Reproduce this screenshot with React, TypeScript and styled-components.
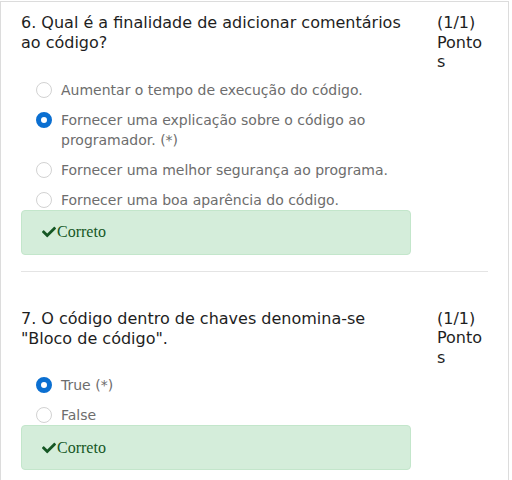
import React from "react";
import styled, { createGlobalStyle } from "styled-components";
import { FaCheck } from "react-icons/fa";

const Global = createGlobalStyle`
  html, body { margin: 0; padding: 0; background: #fff; }
  body { font-family: "DejaVu Sans", Verdana, sans-serif; }
`;

const Card = styled.div`
  margin-top: 1px;
  width: 509px;
  min-height: 480px;
  border: 1px solid #dcdcdc;
  border-bottom: none;
  padding: 11px 20px 0 20px;
  box-sizing: border-box;
`;

const Question = styled.section<{ $first?: boolean }>`
  padding-top: ${(p) => (p.$first ? 0 : 37)}px;
`;

const Header = styled.div`
  display: flex;
  justify-content: space-between;
  align-items: flex-start;
  color: #1e1e1e;
  font-size: 16px;
  line-height: 20px;
`;

const QText = styled.div`
  width: 390px;
`;

const Points = styled.div`
  width: 51px;
  line-height: 19.5px;
  overflow-wrap: anywhere;
`;

const OptionList = styled.div`
  display: flex;
  flex-direction: column;
  gap: 10px;
  padding: 8px 0 0 15px;
`;

const Option = styled.div`
  display: flex;
  align-items: flex-start;
  gap: 9px;
  font-size: 14px;
  line-height: 20px;
  color: #6d6d6d;
`;

const Radio = styled.span<{ $checked?: boolean }>`
  flex: none;
  box-sizing: border-box;
  width: 16px;
  height: 16px;
  margin-top: 2px;
  border-radius: 50%;
  background: #fff;
  border: ${(p) => (p.$checked ? "5px solid #0b6fd1" : "1px solid #d2d2d2")};
`;

const OptionText = styled.span`
  width: 350px;
`;

const Feedback = styled.div`
  width: 390px;
  box-sizing: border-box;
  height: 45px;
  background: #d4edda;
  border: 1px solid #c3e6cb;
  border-radius: 4px;
  padding: 0 20px;
  display: flex;
  align-items: center;
  gap: 1px;
  color: #155724;
  font-family: "Liberation Serif", "Times New Roman", serif;
  font-size: 16px;
`;

const Divider = styled.hr`
  margin: 16px 0 0 0;
  width: 467px;
  border: none;
  border-top: 1px solid #e4e4e4;
  height: 0;
`;

type Opt = { text: string; checked?: boolean };

const questions: { title: string; options: Opt[] }[] = [
  {
    title: "6. Qual é a finalidade de adicionar comentários ao código?",
    options: [
      { text: "Aumentar o tempo de execução do código." },
      {
        text: "Fornecer uma explicação sobre o código ao programador. (*)",
        checked: true,
      },
      { text: "Fornecer uma melhor segurança ao programa." },
      { text: "Fornecer uma boa aparência do código." },
    ],
  },
  {
    title: '7. O código dentro de chaves denomina-se "Bloco de código".',
    options: [{ text: "True (*)", checked: true }, { text: "False" }],
  },
];

export default function App() {
  return (
    <>
      <Global />
      <Card>
        {questions.map((q, i) => (
          <Question key={i} $first={i === 0}>
            <Header>
              <QText>{q.title}</QText>
              <Points>(1/1) Pontos</Points>
            </Header>
            <OptionList>
              {q.options.map((o, j) => (
                <Option key={j}>
                  <Radio $checked={o.checked} />
                  <OptionText>{o.text}</OptionText>
                </Option>
              ))}
            </OptionList>
            <Feedback>
              <FaCheck size={14} />
              Correto
            </Feedback>
            {i === 0 && <Divider />}
          </Question>
        ))}
      </Card>
    </>
  );
}
